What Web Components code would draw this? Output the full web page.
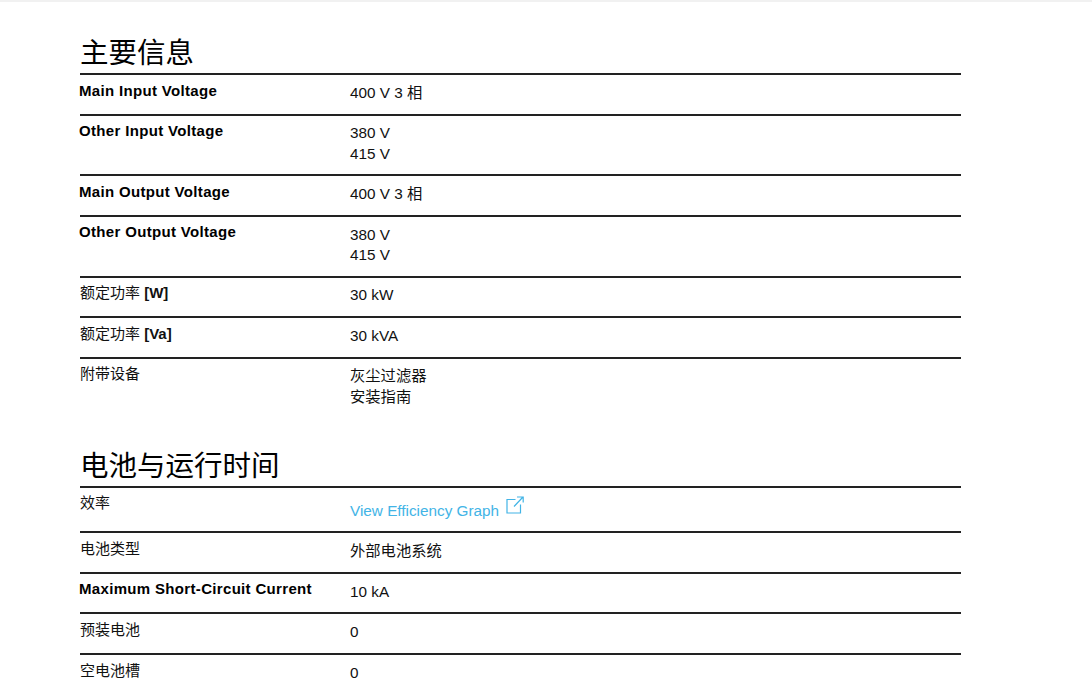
<!DOCTYPE html>
<html lang="zh">
<head>
<meta charset="utf-8">
<title>规格</title>
<style>
  html, body { margin: 0; height: 682px; overflow: hidden; background: #fff; }
  body {
    font-family: "Liberation Sans", "Noto Sans CJK SC", sans-serif;
    color: #000;
    border-top: 2px solid #f1f1f1;
    box-sizing: border-box;
  }
  main { display: block; width: 881px; margin-left: 80px; padding-top: 31px; }
  b { font-weight: 700; }
</style>
</head>
<body>
<main>
  <spec-section heading="主要信息">
    <spec-row h="40.6" bold><span slot="label">Main Input Voltage</span>400 V 3 相</spec-row>
    <spec-row h="60.7" bold><span slot="label">Other Input Voltage</span>380 V<br>415 V</spec-row>
    <spec-row h="40.6" bold><span slot="label">Main Output Voltage</span>400 V 3 相</spec-row>
    <spec-row h="60.7" bold><span slot="label">Other Output Voltage</span>380 V<br>415 V</spec-row>
    <spec-row h="40.6"><span slot="label">额定功率 <b>[W]</b></span>30 kW</spec-row>
    <spec-row h="40.6"><span slot="label">额定功率 <b>[Va]</b></span>30 kVA</spec-row>
    <spec-row h="70"><span slot="label">附带设备</span>灰尘过滤器<br>安装指南</spec-row>
  </spec-section>
  <spec-section heading="电池与运行时间" style="margin-top:17.2px">
    <spec-row h="45.3" link><span slot="label">效率</span><ext-link>View Efficiency Graph</ext-link></spec-row>
    <spec-row h="40.6"><span slot="label">电池类型</span>外部电池系统</spec-row>
    <spec-row h="40.6" bold><span slot="label">Maximum Short-Circuit Current</span>10 kA</spec-row>
    <spec-row h="40.6"><span slot="label">预装电池</span>0</spec-row>
    <spec-row h="41"><span slot="label">空电池槽</span>0</spec-row>
  </spec-section>
</main>
<script>
  class SpecSection extends HTMLElement {
    constructor() {
      super();
      this.attachShadow({ mode: 'open' });
    }
    connectedCallback() {
      this.shadowRoot.innerHTML = `
        <style>
          :host { display: block; }
          h2 { margin: 0; height: 40px; font-size: 28.5px; line-height: 40px; font-weight: 400; }
          .rows { border-top: 2px solid #222; }
        </style>
        <h2></h2>
        <div class="rows"><slot></slot></div>
      `;
      this.shadowRoot.querySelector('h2').textContent = this.getAttribute('heading');
    }
  }
  customElements.define('spec-section', SpecSection);

  class SpecRow extends HTMLElement {
    constructor() {
      super();
      this.attachShadow({ mode: 'open' });
    }
    connectedCallback() {
      this.shadowRoot.innerHTML = `
        <style>
          :host { display: grid; grid-template-columns: 270px 1fr; box-sizing: border-box; font-size: 15.3px; line-height: 20.5px; color: #111; }
          :host(:not(:last-child)) { border-bottom: 2px solid #222; }
          .label { padding-top: 5.5px; font-size: 15px; }
          :host([bold]) .label { font-weight: 700; letter-spacing: 0.33px; color: #000; margin-left: -1px; }
          .value { padding-top: 7.7px; }
          :host([link]) .value { padding-top: 13.2px; }
        </style>
        <div class="label"><slot name="label"></slot></div>
        <div class="value"><slot></slot></div>
      `;
      // row heights are fractional in the source, so they come in as attributes
      this.style.height = this.getAttribute('h') + 'px';
    }
  }
  customElements.define('spec-row', SpecRow);

  class ExtLink extends HTMLElement {
    constructor() {
      super();
      this.attachShadow({ mode: 'open' });
    }
    connectedCallback() {
      this.shadowRoot.innerHTML = `
        <style>
          :host { display: inline-flex; align-items: flex-start; color: #42b4e6; gap: 7px; }
          svg { margin-top: -5px; }
        </style>
        <slot></slot>
        <svg width="18" height="18" viewBox="0 0 18 18" fill="none" stroke="#42b4e6" stroke-width="1.2">
          <path d="M9.5 3.5H1V17H14.5V8.5"/>
          <path d="M8 10.5L16.5 1.5M11 1H17.2V6.5"/>
        </svg>
      `;
    }
  }
  customElements.define('ext-link', ExtLink);
</script>
</body>
</html>
